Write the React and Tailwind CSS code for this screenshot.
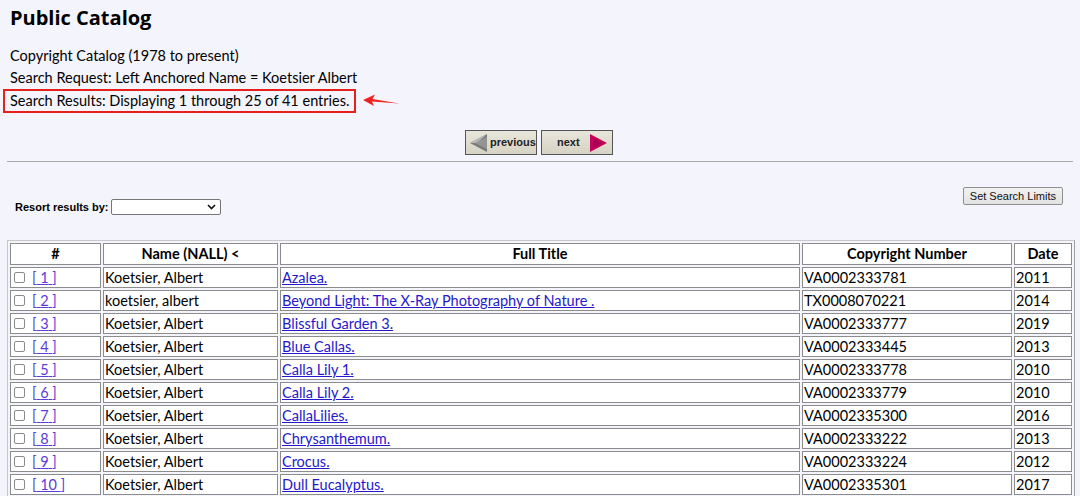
import React from "react";

const rows = [
  ["1", "Koetsier, Albert", "Azalea.", "VA0002333781", "2011"],
  ["2", "koetsier, albert", "Beyond Light: The X-Ray Photography of Nature .", "TX0008070221", "2014"],
  ["3", "Koetsier, Albert", "Blissful Garden 3.", "VA0002333777", "2019"],
  ["4", "Koetsier, Albert", "Blue Callas.", "VA0002333445", "2013"],
  ["5", "Koetsier, Albert", "Calla Lily 1.", "VA0002333778", "2010"],
  ["6", "Koetsier, Albert", "Calla Lily 2.", "VA0002333779", "2010"],
  ["7", "Koetsier, Albert", "CallaLilies.", "VA0002335300", "2016"],
  ["8", "Koetsier, Albert", "Chrysanthemum.", "VA0002333222", "2013"],
  ["9", "Koetsier, Albert", "Crocus.", "VA0002333224", "2012"],
  ["10", "Koetsier, Albert", "Dull Eucalyptus.", "VA0002335301", "2017"],
];

function PrevButton() {
  return (
    <div className="w-[72px] h-[25px] border border-[#555] bg-gradient-to-b from-[#e8e6da] to-[#d6d3c4] flex items-center pl-[3px] gap-[2px]">
      <svg width="19" height="20" viewBox="0 0 19 20">
        <polygon points="18,1 1,10 18,19" fill="#7a7a7a" />
        <polygon points="18,1 1,10 8,10" fill="#b8b8b8" />
        <polygon points="18,4 6,10 18,16" fill="#959595" />
      </svg>
      <span className="text-[11px] font-bold text-[#222]" style={{ fontFamily: "'Liberation Sans', Arial, sans-serif" }}>previous</span>
    </div>
  );
}

function NextButton() {
  return (
    <div className="w-[72px] h-[25px] border border-[#555] bg-gradient-to-b from-[#e8e6da] to-[#d6d3c4] flex items-center justify-between pl-[15px] pr-[4px]">
      <span className="text-[11px] font-bold text-[#222]" style={{ fontFamily: "'Liberation Sans', Arial, sans-serif" }}>next</span>
      <svg width="19" height="20" viewBox="0 0 19 20">
        <polygon points="1,1 18,10 1,19" fill="#c4005c" />
        <polygon points="4,5 13,10 4,15" fill="#a80050" />
      </svg>
    </div>
  );
}

function Checkbox() {
  return <span className="inline-block w-[11px] h-[11px] border border-[#8a8a8a] rounded-[2px] bg-white align-middle mr-[7px] mb-[2px]" />;
}

export default function App() {
  const font = { fontFamily: "Lato, 'Noto Sans', sans-serif" };
  const cell = "h-[21px] p-0 pl-[1px] leading-[19px] bg-white border border-[#8c8c8c] whitespace-nowrap";
  return (
    <div className="h-[496px] bg-[#f4f4fc] text-black overflow-hidden" style={font}>
      <h1 className="text-[20px] font-bold leading-[26px] pl-[10px] pt-[5px] m-0" style={{ fontFamily: "'Open Sans', sans-serif" }}>Public Catalog</h1>
      <div className="mt-[14px] text-[14.5px] leading-[22px]">
        <div className="pl-[10px]">Copyright Catalog (1978 to present)</div>
        <div className="pl-[10px]">Search Request: Left Anchored Name = Koetsier Albert</div>
        <div className="flex items-center">
          <div className="ml-[3px] w-[353px] h-[24px] border-2 border-[#e8201c] pl-[5px] leading-[20px] whitespace-nowrap">
            Search Results: Displaying 1 through 25 of 41 entries.
          </div>
          <svg width="40" height="16" viewBox="0 0 40 16" className="ml-[5px] mt-[1px]">
            <path d="M2 6 L14 0.5 L11.5 5 L38 9.5 L11 7.5 L13 12 Z" fill="#ee2222" />
          </svg>
        </div>
      </div>
      <div className="flex justify-center gap-[4px] mt-[17px] pr-[2px]">
        <PrevButton />
        <NextButton />
      </div>
      <div className="mx-[7px] mt-[6px] border-t border-[#a8a8a8]" />
      <div className="flex justify-between items-start pl-[15px] pt-[25px] pr-[17px]">
        <div className="flex items-center mt-[12px]">
          <span className="text-[11px] font-bold" style={{ fontFamily: "'Liberation Sans', Arial, sans-serif" }}>Resort results by:</span>
          <div className="ml-[2px] w-[110px] h-[16px] bg-white border border-[#767676] rounded-[2px] flex justify-end items-center pr-[4px]">
            <svg width="9" height="6" viewBox="0 0 9 6">
              <path d="M1 1 L4.5 4.5 L8 1" stroke="#111" strokeWidth="1.6" fill="none" />
            </svg>
          </div>
        </div>
        <div className="h-[18px] px-[6px] border border-[#8f8f8f] rounded-[2px] bg-gradient-to-b from-[#f2f2f2] to-[#e2e2e2] text-[11px] leading-[16px] text-[#111]" style={{ fontFamily: "'Liberation Sans', Arial, sans-serif" }}>
          Set Search Limits
        </div>
      </div>
      <div className="mt-[24px] ml-[7px]">
        <table className="w-[1067px] table-fixed border-separate border-spacing-[2px] border border-t-[#c8c8c8] border-l-[#c8c8c8] border-r-[#a0a0a0] border-b-[#a0a0a0] bg-[#f4f4fc] text-[14.5px]">
          <colgroup>
            <col className="w-[91px]" />
            <col className="w-[175px]" />
            <col className="w-[520px]" />
            <col className="w-[210px]" />
            <col className="w-[58px]" />
          </colgroup>
          <thead>
            <tr>
              {["#", "Name (NALL) <", "Full Title", "Copyright Number", "Date"].map((h) => (
                <th key={h} className="h-[22px] p-0 leading-[20px] bg-white border border-[#8c8c8c] font-bold text-center">
                  {h}
                </th>
              ))}
            </tr>
          </thead>
          <tbody>
            {rows.map((r) => (
              <tr key={r[0]}>
                <td className={cell + " pl-[3px]"}>
                  <Checkbox />
                  <span className="text-[#5b3cd8]">
                    [<span className="underline"> {r[0]} </span>]
                  </span>
                </td>
                <td className={cell}>{r[1]}</td>
                <td className={cell}>
                  <span className="text-[#2518cc] underline">{r[2]}</span>
                </td>
                <td className={cell}>{r[3]}</td>
                <td className={cell}>{r[4]}</td>
              </tr>
            ))}
          </tbody>
        </table>
      </div>
    </div>
  );
}
